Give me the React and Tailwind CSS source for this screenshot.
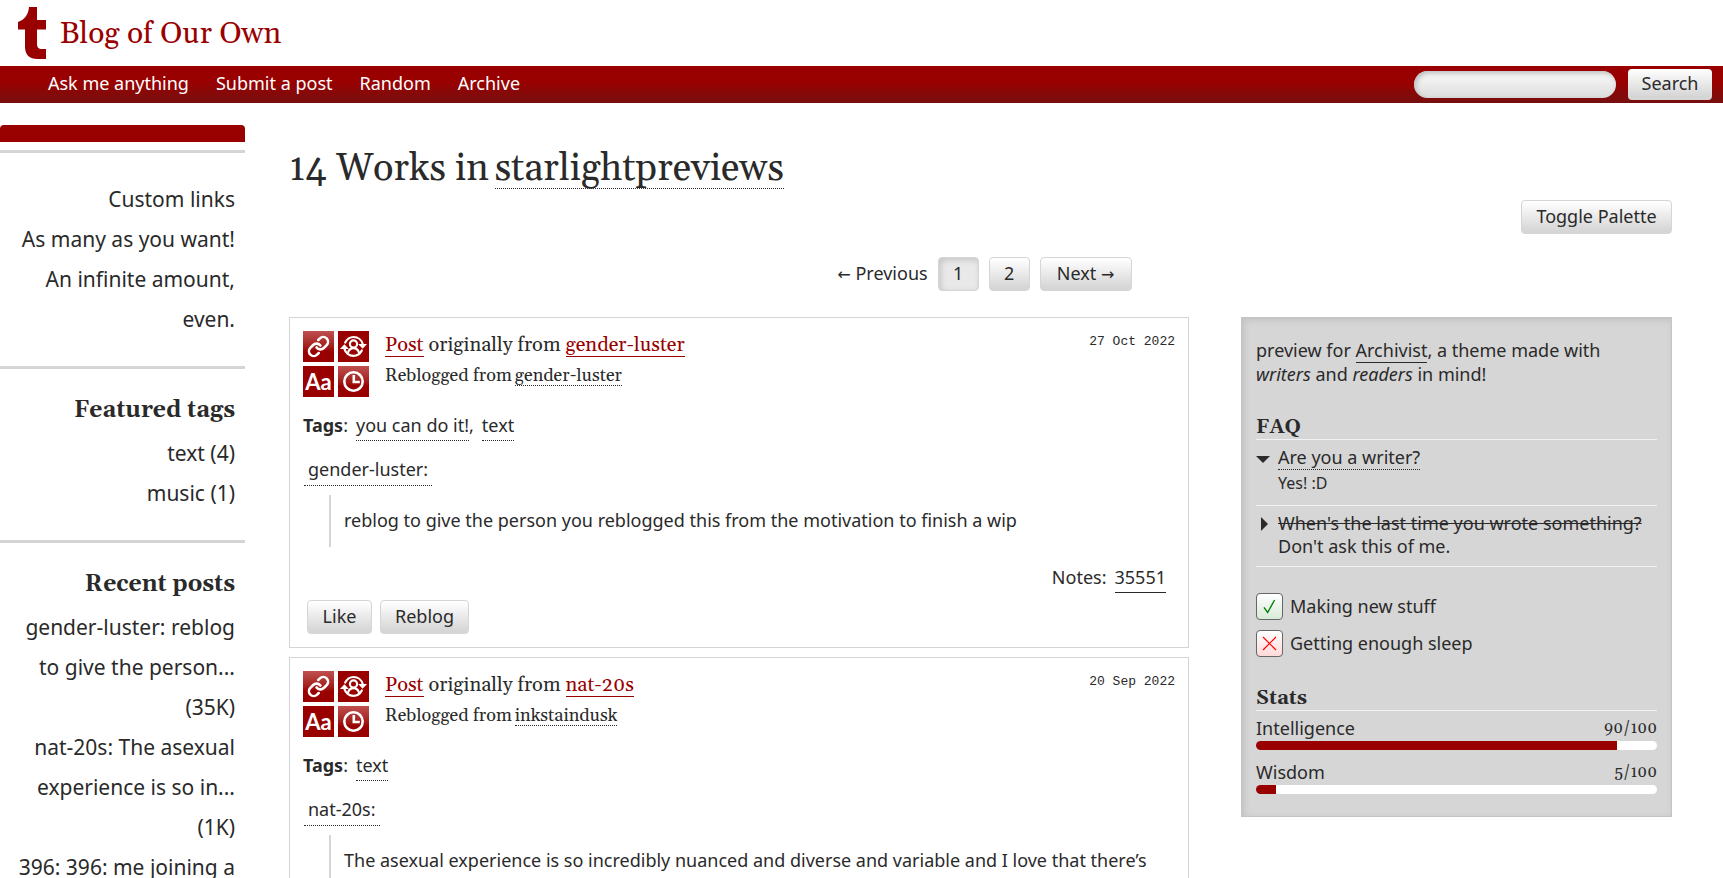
import { Link } from "lucide-react";

const SERIF = "font-['Gelasio','Liberation_Serif',serif]";

const NAV = ["Ask me anything", "Submit a post", "Random", "Archive"];

const POSTS = [
  {
    author: "gender-luster",
    via: "gender-luster",
    date: "27 Oct 2022",
    tags: ["you can do it!", "text"],
    body: "reblog to give the person you reblogged this from the motivation to finish a wip",
    notes: "35551",
  },
  {
    author: "nat-20s",
    via: "inkstaindusk",
    date: "20 Sep 2022",
    tags: ["text"],
    body: "The asexual experience is so incredibly nuanced and diverse and variable and I love that there’s",
  },
];

const STATS = [
  { name: "Intelligence", value: 90 },
  { name: "Wisdom", value: 5 },
];

const buttonClass =
  "flex h-[34px] items-center justify-center rounded border border-[#d5d5d5] bg-linear-to-b from-white from-[2%] to-[#d5d5d5] to-[95%] pb-[2px] text-[18px] text-[#2a2a2a]";

function LogoIcon() {
  return (
    <svg viewBox="0 0 28 52" className="h-[52px] w-7" fill="#990000" aria-hidden="true">
      <path d="M11 0h8v13h9v9.500h-9v14c0 4 1.500 5.500 5 5.500h4v10h-8.500C11.500 52 7 48 7 39.500v-17H0V15C6 13 10.500 8 11 0z" />
    </svg>
  );
}

function ReblogIcon() {
  return (
    <svg viewBox="0 0 31 31" className="size-[31px]" fill="none" stroke="#fff" strokeWidth="2.200" strokeLinecap="round" aria-hidden="true">
      <circle cx="15.500" cy="13" r="3.600" />
      <path d="M10 21.500c1-2.800 3-4.300 5.500-4.300s4.500 1.500 5.500 4.300" />
      <path d="M7.200 11.500C9 8 12 6 15.600 6c4.400 0 8 3 9.200 7.200" />
      <path d="M23.800 19.500c-1.800 3.500-4.800 5.300-8.300 5.300-4.400 0-8-3-9.200-7.200" />
      <path d="M22 13.800h5.200l-2.600 2.800zM3.800 17.200H9l-2.600-2.800z" fill="#fff" strokeWidth="1.600" />
    </svg>
  );
}

function ClockIcon() {
  return (
    <svg viewBox="0 0 31 31" className="size-[31px]" fill="none" stroke="#fff" strokeWidth="2.600" aria-hidden="true">
      <circle cx="15.500" cy="15.500" r="9.200" />
      <path d="M15.800 9v7h6" />
    </svg>
  );
}

function PostIcons() {
  const tile = "flex size-[31px] items-center justify-center";
  return (
    <div className="grid shrink-0 grid-cols-2 gap-1">
      <span className={`${tile} bg-linear-to-b from-[#bf4f4f] to-[#990000] to-65%`}>
        <Link size={23} strokeWidth={2.7} color="#fff" aria-hidden="true" />
      </span>
      <span className={`${tile} bg-[#990000]`}><ReblogIcon /></span>
      <span className={`${tile} bg-[#990000] font-['Lato',sans-serif] text-[22px] leading-none font-bold text-white`}>Aa</span>
      <span className={`${tile} bg-linear-to-b from-[#bf4f4f] to-[#990000] to-65%`}><ClockIcon /></span>
    </div>
  );
}

function Post({ post }) {
  return (
    <article className="border border-[#d5d5d5] p-[13px]">
      <header className="flex">
        <PostIcons />
        <div className={`ml-4 flex-1 ${SERIF}`}>
          <h2 className="flex gap-[5px] text-[20px] leading-[21px]">
            <a href="#post" className="border-b border-[#990000] pt-1 text-[#990000]">Post</a>
            <span className="pt-1">originally from</span>
            <a href="#author" className="border-b border-[#990000] pt-1 text-[#990000]">{post.author}</a>
          </h2>
          <p className="mt-[7px] flex gap-[3px] text-[18px] leading-[19px]">
            <span className="pt-[2px]">Reblogged from</span>
            <a href="#via" className="border-b border-dotted border-[#2a2a2a] pt-[2px]">{post.via}</a>
          </p>
        </div>
        <time className="font-['Liberation_Mono',monospace] text-[13px] leading-[22px]">{post.date}</time>
      </header>
      <p className="mt-4 flex leading-[25px]">
        <b>Tags</b>:
        {post.tags.map((tag, i) => (
          <span key={tag} className="ml-2 flex">
            <a href="#tag" className="border-b border-dotted border-[#2a2a2a] pb-[2px]">{tag}</a>
            {i < post.tags.length - 1 && <span>,</span>}
          </span>
        ))}
      </p>
      <p className="mt-4 ml-px flex leading-6">
        <a href="#author" className="border-b border-dotted border-[#2a2a2a] px-1 pb-1">{post.author}:</a>
      </p>
      <blockquote className="mt-[9px] ml-[26px] border-l-2 border-[#d5d5d5] px-[13px] pt-3 pb-[14px] leading-[26px]">{post.body}</blockquote>
      {post.notes && (
        <>
          <p className="mt-[17px] mr-[9px] flex justify-end gap-2 leading-[26px]">
            <span>Notes:</span>
            <a href="#notes" className="border-b border-[#2a2a2a] pb-[2px]">{post.notes}</a>
          </p>
          <div className="mt-[7px] ml-1 flex gap-2">
            <button type="button" className={`${buttonClass} w-[65px]`}>Like</button>
            <button type="button" className={`${buttonClass} w-[89px]`}>Reblog</button>
          </div>
        </>
      )}
    </article>
  );
}

function SideSection({ title, children }) {
  return (
    <section className="border-t-3 border-[#d5d5d5] pt-[26px] pr-[10px] pb-[27px] pl-2 text-right">
      {title && <h2 className={`mb-2 pt-[2px] text-[23px] leading-7 font-bold ${SERIF}`}>{title}</h2>}
      <ul className="text-[21px] leading-10">{children}</ul>
    </section>
  );
}

function PanelHeading({ children }) {
  return <h2 className={`border-b border-[#f2f2f2] pt-[2px] text-[20px] leading-6 font-bold ${SERIF}`}>{children}</h2>;
}

function FaqItem({ open, summary, children }) {
  return (
    <details open={open} className="group border-b border-[#f2f2f2]">
      <summary className="flex list-none pt-[6px]">
        <svg viewBox="0 0 14 14" className="mt-[5px] mr-2 size-[14px] shrink-0 group-open:rotate-90" fill="#2a2a2a" aria-hidden="true">
          <path d="M5 0l7 7-7 7z" />
        </svg>
        <span>{summary}</span>
      </summary>
      {children}
    </details>
  );
}

export default function App() {
  return (
    <div className="h-screen overflow-hidden bg-white font-['Noto_Sans',sans-serif] text-[18px] text-[#2a2a2a]">
      <header>
        <div className="flex h-[66px] items-center gap-[14px] pl-[18px]">
          <LogoIcon />
          <h1 className={`pt-[2px] text-[30px] leading-9 text-[#990000] ${SERIF}`}>Blog of Our Own</h1>
        </div>
        <div className="flex h-[37px] items-center bg-linear-to-b from-[#990000] from-45% to-[#760e0e] pr-[11px] pl-12">
          <nav className="flex flex-1 gap-[27px] pb-[2px] text-white">
            {NAV.map((item) => (
              <a key={item} href="#nav">{item}</a>
            ))}
          </nav>
          <form className="flex items-center gap-3">
            <input type="search" aria-label="Search" className="h-[27px] w-[202px] rounded-full bg-linear-to-b from-[#f2f2f2] from-30% to-[#dcdcdc] px-3 shadow-[inset_2px_2px_5px_#bbb] outline-none" />
            <button type="button" className="h-[31px] w-[84px] rounded bg-linear-to-b from-white to-[#d5d5d5] to-90% pb-[2px]">Search</button>
          </form>
        </div>
      </header>

      <div className="flex">
        <aside className="w-[245px] shrink-0 pt-[22px]">
          <div className="mb-2 h-[17px] rounded-t bg-[#990000]" />
          <SideSection>
            <li><a href="#custom">Custom links</a></li>
            <li><a href="#custom">As many as you want!</a></li>
            <li><a href="#custom">An infinite amount, even.</a></li>
          </SideSection>
          <SideSection title="Featured tags">
            <li><a href="#tag">text (4)</a></li>
            <li><a href="#tag">music (1)</a></li>
          </SideSection>
          <SideSection title="Recent posts">
            <li><a href="#recent">gender-luster: reblog to give the person... (35K)</a></li>
            <li><a href="#recent">nat-20s: The asexual experience is so in... (1K)</a></li>
            <li><a href="#recent">396: 396: me joining a</a></li>
          </SideSection>
        </aside>

        <main className="min-w-0 flex-1 pt-[43px] pr-[51px] pl-11">
          <h1 className={`flex gap-[6px] text-[38px] leading-[38px] ${SERIF}`}>
            <span className="pt-1">14 Works in</span>
            <a href="#blog" className="border-b border-dotted border-[#2a2a2a] pt-1">starlightpreviews</a>
          </h1>
          <div className="mt-[11px] flex justify-end">
            <button type="button" className={`${buttonClass} w-[151px]`}>Toggle Palette</button>
          </div>
          <nav className="mt-[23px] flex items-center justify-center gap-[10px] pl-2">
            <span className="pb-[2px]"><span className="font-['DejaVu_Sans',sans-serif] text-[16px]">←</span> Previous</span>
            <span className="flex h-[34px] w-[41px] items-center justify-center rounded border border-[#d5d5d5] bg-[#e9e9e9] pb-[2px] shadow-[inset_2px_2px_6px_#c4c4c4]">1</span>
            <a href="#2" className={`${buttonClass} w-[41px]`}>2</a>
            <a href="#2" className={`${buttonClass} w-[92px]`}>
              <span>Next <span className="font-['DejaVu_Sans',sans-serif] text-[16px]">→</span></span>
            </a>
          </nav>

          <div className="mt-[26px] grid grid-cols-[900fr_431fr] items-start gap-[52px]">
            <div className="flex flex-col gap-[9px]">
              {POSTS.map((post) => (
                <Post key={post.date} post={post} />
              ))}
            </div>

            <aside className="border border-[#c4c4c4] bg-[#d6d6d6] px-[14px] pt-5 pb-[22px] shadow-[inset_2px_2px_6px_#c0c0c0]">
              <p className="leading-6">
                preview for <a href="#archivist" className="border-b border-[#2a2a2a]">Archivist</a>, a theme made with
                <br />
                <i>writers</i> and <i>readers</i> in mind!
              </p>
              <div className="mt-[27px] leading-[23px]">
                <PanelHeading>FAQ</PanelHeading>
                <FaqItem open summary={<span className="block border-b border-dotted border-[#2a2a2a]">Are you a writer?</span>}>
                  <p className="mt-[2px] ml-[22px] pb-[10px] text-[16px]">Yes! :D</p>
                </FaqItem>
                <FaqItem
                  summary={
                    <span className="block pb-2">
                      <s>When's the last time you wrote something?</s>
                      <br />
                      Don't ask this of me.
                    </span>
                  }
                />
              </div>
              <ul className="mt-[26px] flex flex-col gap-[10px]">
                <li>
                  <label className="flex h-[27px] items-center gap-[7px]">
                    <input type="checkbox" defaultChecked className="sr-only" />
                    <svg viewBox="0 0 27 27" className="size-[27px] rounded border border-[#666] bg-linear-to-b from-white to-[#d9ead9]" fill="none" stroke="#008000" strokeWidth="1.500" aria-hidden="true">
                      <path d="M7.500 14.500l4 5.500L19 6.500" />
                    </svg>
                    Making new stuff
                  </label>
                </li>
                <li>
                  <label className="flex h-[27px] items-center gap-[7px]">
                    <input type="checkbox" className="sr-only" />
                    <svg viewBox="0 0 27 27" className="size-[27px] rounded border border-[#666] bg-linear-to-b from-white to-[#ffd9d9]" fill="none" stroke="#ff0000" strokeWidth="1.300" aria-hidden="true">
                      <path d="M6.500 6.500l14 14M20.500 6.500l-14 14" />
                    </svg>
                    Getting enough sleep
                  </label>
                </li>
              </ul>
              <div className="mt-[27px]">
                <PanelHeading>Stats</PanelHeading>
                <ul className="mt-1 flex flex-col gap-[9px]">
                  {STATS.map((stat) => (
                    <li key={stat.name}>
                      <div className="flex items-end justify-between leading-[26px]">
                        <span>{stat.name}</span>
                        <span className={`text-[16px] ${SERIF}`}>{stat.value}/100</span>
                      </div>
                      <div role="progressbar" aria-label={stat.name} aria-valuenow={stat.value} className="h-[9px] overflow-hidden rounded-full bg-white">
                        <div className="h-full bg-[#990000]" style={{ width: `${stat.value}%` }} />
                      </div>
                    </li>
                  ))}
                </ul>
              </div>
            </aside>
          </div>
        </main>
      </div>
    </div>
  );
}
